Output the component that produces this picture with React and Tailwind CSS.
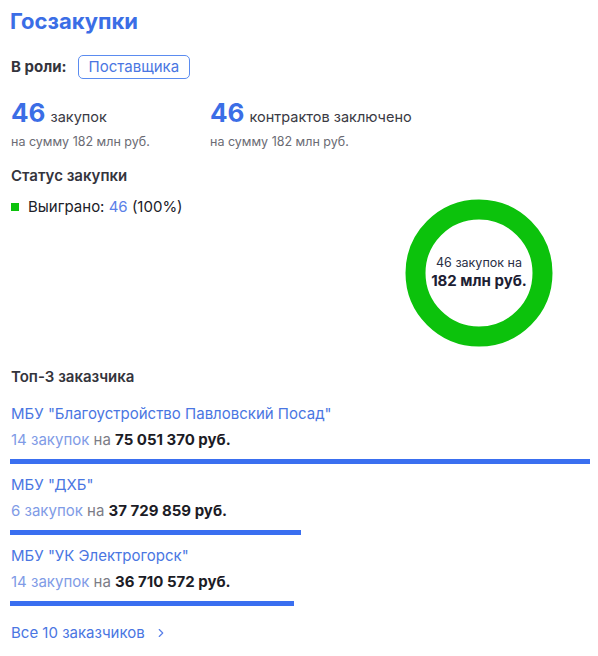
import React from 'react';
import { FiChevronRight } from 'react-icons/fi';

const customers = [
  { name: 'МБУ "Благоустройство Павловский Посад"', count: '14 закупок', sum: '75 051 370 руб.', share: 1 },
  { name: 'МБУ "ДХБ"', count: '6 закупок', sum: '37 729 859 руб.', share: 0.502 },
  { name: 'МБУ "УК Электрогорск"', count: '14 закупок', sum: '36 710 572 руб.', share: 0.49 },
];

const Stat = ({ value, label, sub }) => (
  <div>
    <div className="flex items-baseline gap-[5px] leading-[32px]">
      <span className="text-[26px] font-bold text-[#3b6ee6]">{value}</span>
      <span className="text-[14.5px] text-[#3a3a44]">{label}</span>
    </div>
    <div className="mt-[1px] text-[12.5px] leading-[16px] text-[#6b6b74]">{sub}</div>
  </div>
);

const Donut = () => (
  <div className="relative w-[148px] h-[148px]">
    <svg width="148" height="148" viewBox="0 0 148 148" className="absolute inset-0">
      <circle cx="74" cy="74" r="63.5" fill="none" stroke="#0cc20c" strokeWidth="20" />
    </svg>
    <div className="absolute inset-0 flex flex-col items-center justify-center pb-[2px]">
      <span className="text-[12.5px] leading-[18px] text-[#2a2f45]">46 закупок на</span>
      <span className="text-[15px] leading-[18px] font-bold text-[#1c2033]">182 млн руб.</span>
    </div>
  </div>
);

export default function App() {
  return (
    <div
      className="w-[598px] h-[656px] bg-white pl-[10px] pr-[8px] pt-[7px]"
      style={{ fontFamily: 'Inter, "Noto Sans", sans-serif' }}
    >
      <h1 className="text-[22px] leading-[28px] font-bold text-[#3b6ee6]">Госзакупки</h1>

      <div className="mt-[20px] flex items-center gap-[11px] h-[24px]">
        <span className="pl-[1px] text-[15px] font-bold text-[#34343c]">В роли:</span>
        <span className="h-[24px] px-[10px] flex items-center rounded-[5px] border border-[#5b8cf0] text-[15px] text-[#4a76e2]">
          Поставщика
        </span>
      </div>

      <div className="mt-[18px] flex pl-[1px]">
        <div className="w-[199px]">
          <Stat value="46" label="закупок" sub="на сумму 182 млн руб." />
        </div>
        <Stat value="46" label="контрактов заключено" sub="на сумму 182 млн руб." />
      </div>

      <div className="mt-[16px] pl-[1px] text-[15px] leading-[20px] font-semibold text-[#34343c]">
        Статус закупки
      </div>

      <div className="mt-[11px] flex items-start">
        <div className="flex items-center gap-[9px] pl-[1px] text-[15px] leading-[20px] text-[#202028]">
          <span className="w-[8px] h-[8px] bg-[#0cc20c]" />
          <span>
            Выиграно: <span className="text-[#5a80e8]">46</span> (100%)
          </span>
        </div>
        <div className="ml-auto mr-[37px] mt-[2px]">
          <Donut />
        </div>
      </div>

      <div className="mt-[20px] pl-[1px] text-[15px] leading-[20px] font-semibold text-[#34343c]">
        Топ-3 заказчика
      </div>

      <div className="mt-[17px]">
        {customers.map((c, i) => (
          <div key={c.name} className={i > 0 ? 'mt-[11px]' : ''}>
            <div className="pl-[1px] text-[15px] leading-[20px] text-[#4a76e2]">{c.name}</div>
            <div className="mt-[6px] pl-[1px] text-[15px] leading-[20px]">
              <span className="text-[#7f9be6]">{c.count}</span>
              <span className="text-[#7c7c86]"> на </span>
              <span className="font-bold text-[#1c1c26]">{c.sum}</span>
            </div>
            <div className="mt-[9px] h-[5px] bg-[#3a6ff0]" style={{ width: `${c.share * 100}%` }} />
          </div>
        ))}
      </div>

      <div className="mt-[17px] pl-[1px] flex items-center gap-[9px] text-[15px] leading-[20px] text-[#4a76e2]">
        <span>Все 10 заказчиков</span>
        <FiChevronRight className="w-[14px] h-[14px] text-[#5a80e8]" />
      </div>
    </div>
  );
}
